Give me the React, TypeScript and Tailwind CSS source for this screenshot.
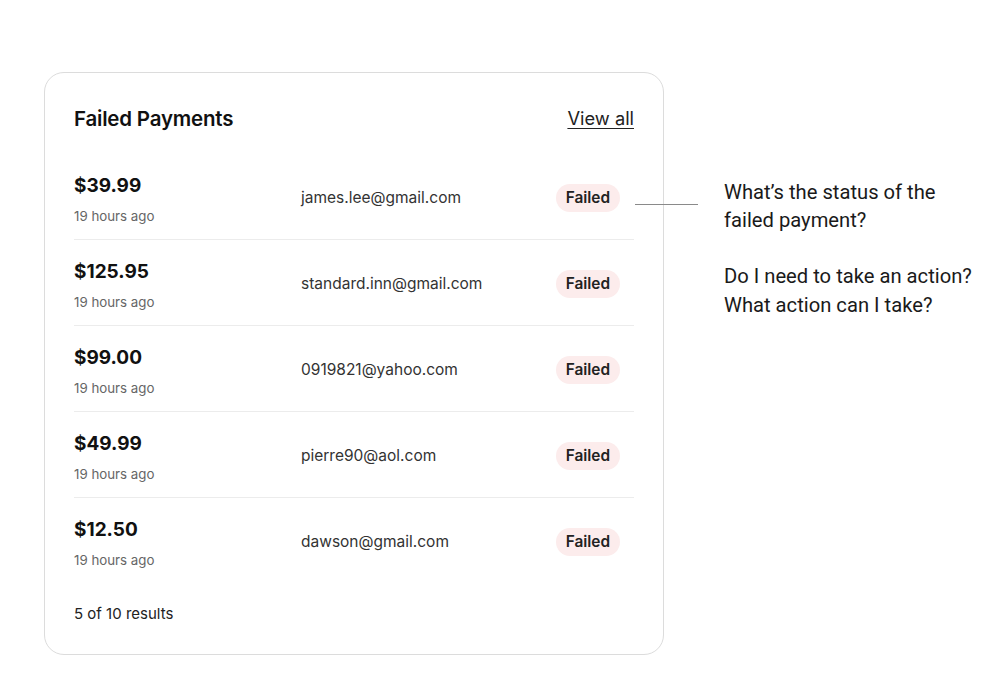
import React from 'react';

const payments = [
  { amount: '$39.99', email: 'james.lee@gmail.com' },
  { amount: '$125.95', email: 'standard.inn@gmail.com' },
  { amount: '$99.00', email: '0919821@yahoo.com' },
  { amount: '$49.99', email: 'pierre90@aol.com' },
  { amount: '$12.50', email: 'dawson@gmail.com' },
];

export default function App() {
  return (
    <div className="relative w-[1004px] h-[690px] bg-white overflow-hidden">
      <div className="flex items-start pt-[72px] pl-[44px]">
        {/* Card */}
        <div
          className="w-[620px] h-[583px] rounded-[20px] border border-[#dcdcdc] bg-white px-[29px] pt-[32px] flex flex-col text-[#111]"
          style={{ fontFamily: 'Inter, "Noto Sans", sans-serif' }}
        >
          <div className="flex items-center justify-between h-[28px]">
            <h2 className="text-[20.5px] font-semibold tracking-[-0.2px]">Failed Payments</h2>
            <a className="text-[18.3px] underline underline-offset-[3px] decoration-1 text-[#222]">View all</a>
          </div>

          <div className="mt-[21px] flex flex-col">
            {payments.map((p, i) => (
              <div
                key={i}
                className={`flex items-center pt-[18px] pb-[13px] ${i === 0 ? 'pt-0' : ''} ${i < payments.length - 1 ? 'border-b border-[#ececec]' : ''}`}
              >
                <div className="w-[227px] flex flex-col">
                  <span className="text-[19px] font-bold leading-[28px]">{p.amount}</span>
                  <span className="mt-[6px] text-[13.3px] leading-[20px] text-[#666]">19 hours ago</span>
                </div>
                <div className="flex-1 text-[15.5px] text-[#333] -mt-[3px]">{p.email}</div>
                <span className="mr-[14px] -mt-[3px] rounded-full bg-[#fcecec] px-[10px] h-[28px] flex items-center text-[15.4px] font-semibold text-[#222]">
                  Failed
                </span>
              </div>
            ))}
          </div>

          <div className="mt-[20px] text-[15px] text-[#222]">5 of 10 results</div>
        </div>

        {/* Annotation */}
        <div
          className="ml-[60px] mt-[106px] text-[20.2px] leading-[28px] text-[#1a1a1a]"
          style={{ fontFamily: 'Roboto, sans-serif' }}
        >
          <p>What’s the status of the</p>
          <p>failed payment?</p>
          <p className="mt-[28px]">Do I need to take an action?</p>
          <p className="mt-[1px]">What action can I take?</p>
        </div>
      </div>

      {/* connector line */}
      <div className="absolute left-[635px] top-[204px] w-[63px] h-px bg-[#8a8a8a]" />
    </div>
  );
}
